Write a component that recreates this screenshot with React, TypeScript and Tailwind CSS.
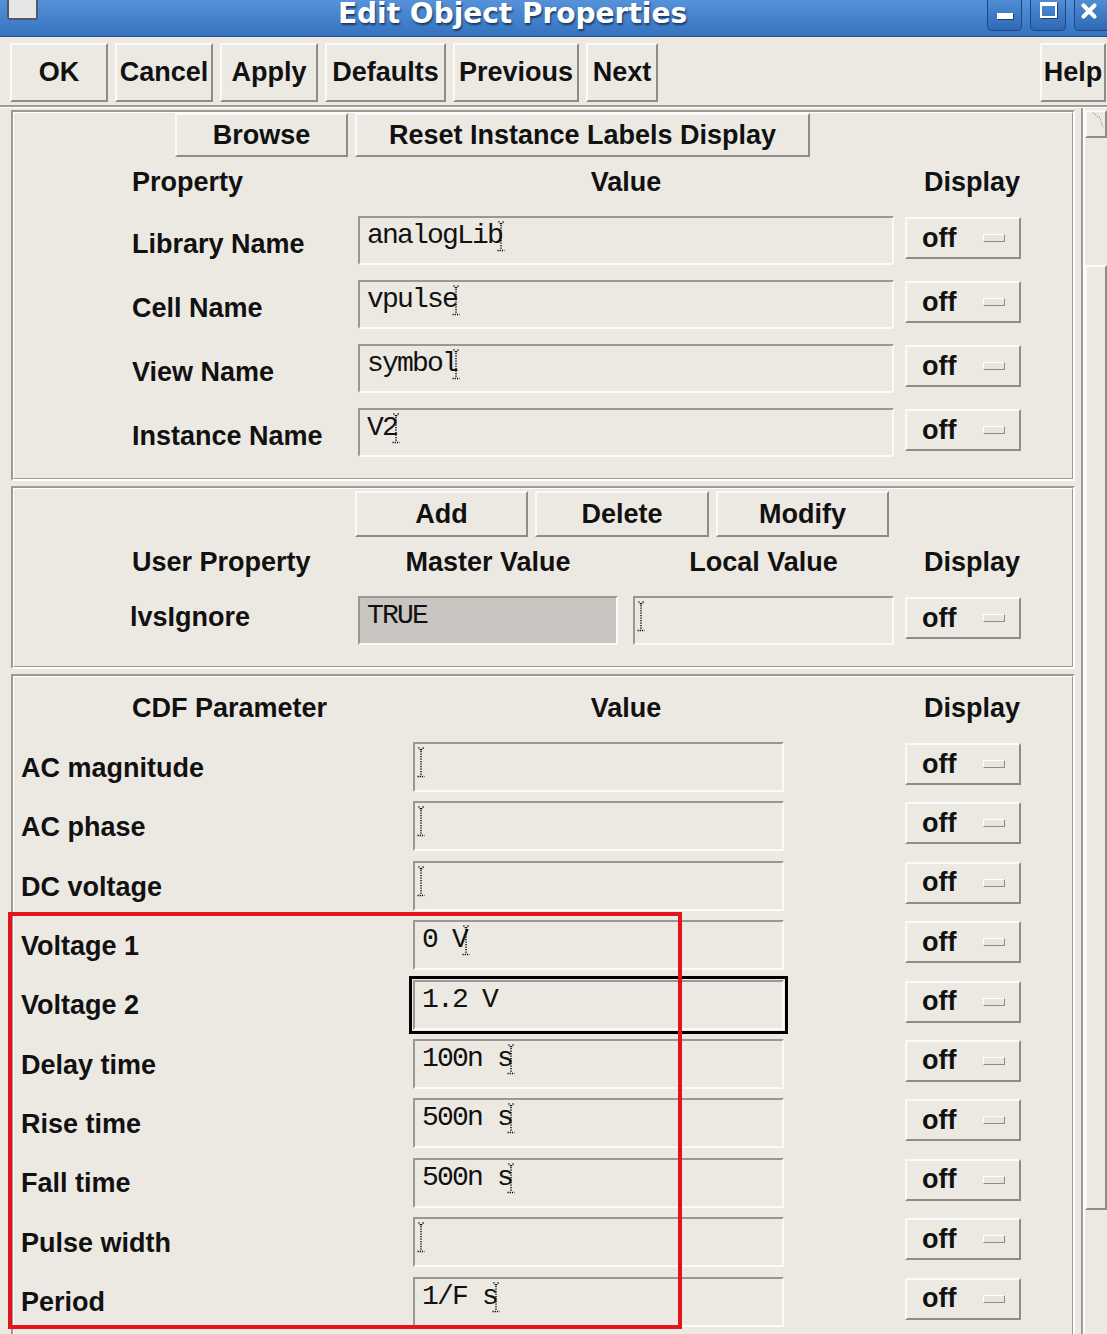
import { X } from 'lucide-react'

const raised = 'border-2 border-t-[#fbfaf8] border-l-[#fbfaf8] border-b-[#8f8c87] border-r-[#8f8c87]'
const sunken = 'border-2 border-t-[#9b9893] border-l-[#9b9893] border-b-[#fbfaf8] border-r-[#fbfaf8]'
const sans = "font-['Liberation_Sans',Arial,sans-serif]"
const mono = "font-['Liberation_Mono','Courier_New',monospace]"

interface Param {
  label: string
  value: string
}

const instanceProps: Param[] = [
  { label: 'Library Name', value: 'analogLib' },
  { label: 'Cell Name', value: 'vpulse' },
  { label: 'View Name', value: 'symbol' },
  { label: 'Instance Name', value: 'V2' },
]

const cdfParams: Param[] = [
  { label: 'AC magnitude', value: '' },
  { label: 'AC phase', value: '' },
  { label: 'DC voltage', value: '' },
  { label: 'Voltage 1', value: '0 V' },
  { label: 'Voltage 2', value: '1.2 V' },
  { label: 'Delay time', value: '100n s' },
  { label: 'Rise time', value: '500n s' },
  { label: 'Fall time', value: '500n s' },
  { label: 'Pulse width', value: '' },
  { label: 'Period', value: '1/F s' },
]

const toolbar = [
  { label: 'OK', w: 'w-[98px]' },
  { label: 'Cancel', w: 'w-[98px]' },
  { label: 'Apply', w: 'w-[98px]' },
  { label: 'Defaults', w: 'w-[121px]' },
  { label: 'Previous', w: 'w-[126px]' },
  { label: 'Next', w: 'w-[72px]' },
]

// dotted text cursor drawn by the old X toolkit
function Cursor() {
  return (
    <svg width="8" height="32" viewBox="0 0 8 32" fill="none" stroke="#000" strokeWidth="1.4" className="shrink-0">
      <path d="M1.5 0.5 L4 3.5 L6.5 0.5" strokeDasharray="1.2 1" />
      <path d="M4 4 V28" strokeDasharray="1.2 1.3" />
      <path d="M0.5 29.5 H7.5" strokeDasharray="1.2 1" />
    </svg>
  )
}

function Field({ value, className = '', gray = false, focused = false }: { value: string; className?: string; gray?: boolean; focused?: boolean }) {
  return (
    <div
      className={`${sunken} ${className} ${gray ? 'bg-[#c9c5c0]' : ''} ${focused ? 'outline-3 outline-offset-1 outline-black' : ''} flex items-start pt-[2px] ${value ? 'pl-[7px]' : 'pl-[2px]'} ${mono} text-[28px] tracking-[-1.8px] leading-[32px] text-[#111]`}
    >
      {value && <span className="whitespace-pre">{value}</span>}
      {!gray && !focused && (
        <span className={value ? '-ml-[5px] mt-[1px]' : 'mt-[1px]'}>
          <Cursor />
        </span>
      )}
    </div>
  )
}

function OffButton() {
  return (
    <div className={`${raised} w-[116px] h-[42px] mt-[1px] flex items-center justify-between pl-[15px] pr-[14px] shrink-0`}>
      <span className="text-[27px] font-bold leading-none">off</span>
      <span className="w-[22px] h-[8px] bg-[#e8e5df] border border-t-white border-l-white border-b-[#8f8c87] border-r-[#8f8c87]" />
    </div>
  )
}

function Button({ label, className = '' }: { label: string; className?: string }) {
  return (
    <div className={`${raised} ${className} flex items-center justify-center text-[27px] font-bold leading-none shrink-0`}>
      {label}
    </div>
  )
}

function Panel({ children, className = '' }: { children: React.ReactNode; className?: string }) {
  return (
    <div className={`border-2 border-t-[#9d9a95] border-l-[#9d9a95] border-b-white border-r-white ${className}`}>
      <div className="border border-t-white border-l-white border-b-[#9d9a95] border-r-[#9d9a95] h-full">{children}</div>
    </div>
  )
}

function Header({ first }: { first: string }) {
  return (
    <div className="flex items-center h-[50px] text-[27px] font-bold">
      <div className="w-[344px] pl-[118px]">{first}</div>
      <div className="w-[536px] text-center">Value</div>
      <div className="ml-[11px] w-[116px] pl-[19px]">Display</div>
    </div>
  )
}

export default function App() {
  return (
    <div className={`relative w-[1107px] h-[1334px] overflow-hidden bg-[#ece9e3] text-[#111] ${sans}`}>
      {/* title bar */}
      <div className="h-[37px] flex items-start bg-linear-to-b from-[#5592d9] to-[#3573c0] border-b border-[#264f86]">
        <div className="ml-[7px] w-[31px] h-[20px] bg-[#e6e6e4] border-2 border-t-0 border-[#4e5a68] rounded-b-[3px]" />
        <div className="flex-1 text-center font-['DejaVu_Sans',sans-serif] font-bold text-[28px] leading-[28px] text-white [text-shadow:1px_2px_2px_#1b3a63]">
          Edit Object Properties
        </div>
        <div className="flex gap-[8px] -mr-[3px]">
          <div className="w-[35px] h-[31px] rounded-b-[5px] border border-t-0 border-[#1d4780] bg-linear-to-b from-[#4f8dd5] to-[#2f69b4] flex items-start justify-center pt-[13px]">
            <div className="w-[16px] h-[6px] bg-white shadow-[1px_1px_0_#1d3f70]" />
          </div>
          <div className="w-[36px] h-[31px] rounded-b-[5px] border border-t-0 border-[#1d4780] bg-linear-to-b from-[#4f8dd5] to-[#2f69b4] flex items-start justify-center pt-[2px]">
            <div className="w-[17px] h-[16px] border-2 border-t-4 border-white shadow-[1px_1px_0_#1d3f70]" />
          </div>
          <div className="w-[36px] h-[31px] rounded-b-[5px] border border-t-0 border-[#1d4780] bg-linear-to-b from-[#4f8dd5] to-[#2f69b4] flex items-start pl-[3px]">
            <X size={22} strokeWidth={4.5} className="text-white" />
          </div>
        </div>
      </div>

      {/* button bar */}
      <div className="h-[70px] flex items-start pt-[6px] pl-[10px] gap-[7px] border-b-2 border-[#a19e99]">
        {toolbar.map((b) => (
          <Button key={b.label} label={b.label} className={`${b.w} h-[59px]`} />
        ))}
        <Button label="Help" className="ml-auto mr-[1px] w-[66px] h-[59px]" />
      </div>

      <div className="flex border-t border-white">
        <div className="w-[1075px] pl-[11px] pt-[2px] flex flex-col gap-[5px]">
          {/* instance properties */}
          <Panel className="h-[371px]">
            <div className="flex gap-[7px] pl-[161px]">
              <Button label="Browse" className="w-[173px] h-[44px]" />
              <Button label="Reset Instance Labels Display" className="w-[455px] h-[44px]" />
            </div>
            <Header first="Property" />
            <div className="flex flex-col gap-[15px] mt-[9px]">
              {instanceProps.map((p) => (
                <div key={p.label} className="flex items-start h-[49px]">
                  <div className="w-[344px] pl-[118px] h-full flex items-center pt-[7px] text-[27px] font-bold">{p.label}</div>
                  <Field value={p.value} className="w-[536px] h-[49px]" />
                  <div className="ml-[11px]">
                    <OffButton />
                  </div>
                </div>
              ))}
            </div>
          </Panel>

          {/* user properties */}
          <Panel className="h-[183px]">
            <div className="flex gap-[7px] pl-[341px] mt-[2px]">
              <Button label="Add" className="w-[173px] h-[46px]" />
              <Button label="Delete" className="w-[174px] h-[46px]" />
              <Button label="Modify" className="w-[173px] h-[46px]" />
            </div>
            <div className="flex items-center h-[50px] text-[27px] font-bold">
              <div className="w-[344px] pl-[118px]">User Property</div>
              <div className="w-[260px] text-center">Master Value</div>
              <div className="ml-[15px] w-[261px] text-center">Local Value</div>
              <div className="ml-[11px] w-[116px] pl-[19px]">Display</div>
            </div>
            <div className="flex items-start h-[49px] mt-[9px]">
              <div className="w-[344px] pl-[116px] h-full flex items-center pb-[6px] text-[27px] font-bold">lvsIgnore</div>
              <Field value="TRUE" gray className="w-[260px] h-[49px]" />
              <Field value="" className="ml-[15px] w-[261px] h-[49px]" />
              <div className="ml-[11px]">
                <OffButton />
              </div>
            </div>
          </Panel>

          {/* CDF parameters */}
          <Panel className="h-[700px]">
            <div className="mt-[6px]">
              <Header first="CDF Parameter" />
            </div>
            <div className="flex flex-col gap-[9.4px] mt-[9px]">
              {cdfParams.map((p) => (
                <div key={p.label} className="flex items-start h-[50px]">
                  <div className="w-[399px] pl-[7px] h-full flex items-center pt-[2px] text-[27px] font-bold">{p.label}</div>
                  <Field value={p.value} focused={p.label === 'Voltage 2'} className="w-[371px] h-[50px]" />
                  <div className="ml-[121px]">
                    <OffButton />
                  </div>
                </div>
              ))}
            </div>
          </Panel>
        </div>

        {/* scrollbar */}
        <div className="w-[32px] pl-[6px] flex">
          <div className="border-l-2 border-[#9d9a95] flex-1 flex">
            <div className="border-l-2 border-white flex-1 pt-[2px] flex flex-col">
              <div className={`${raised} h-[28px] flex justify-end pr-[1px]`}>
                <svg width="12" height="18" viewBox="0 0 12 18" fill="none" stroke="#8a8782" strokeWidth="1.2" strokeDasharray="1 1.5">
                  <path d="M1 1 L8 6 L11 15" />
                </svg>
              </div>
              <div className="h-[127px]" />
              <div className={`${raised} h-[945px]`} />
            </div>
          </div>
        </div>
      </div>

      {/* annotation */}
      <div className="absolute left-[8px] top-[912px] w-[674px] h-[417px] border-4 border-[#e3141c]" />
    </div>
  )
}
